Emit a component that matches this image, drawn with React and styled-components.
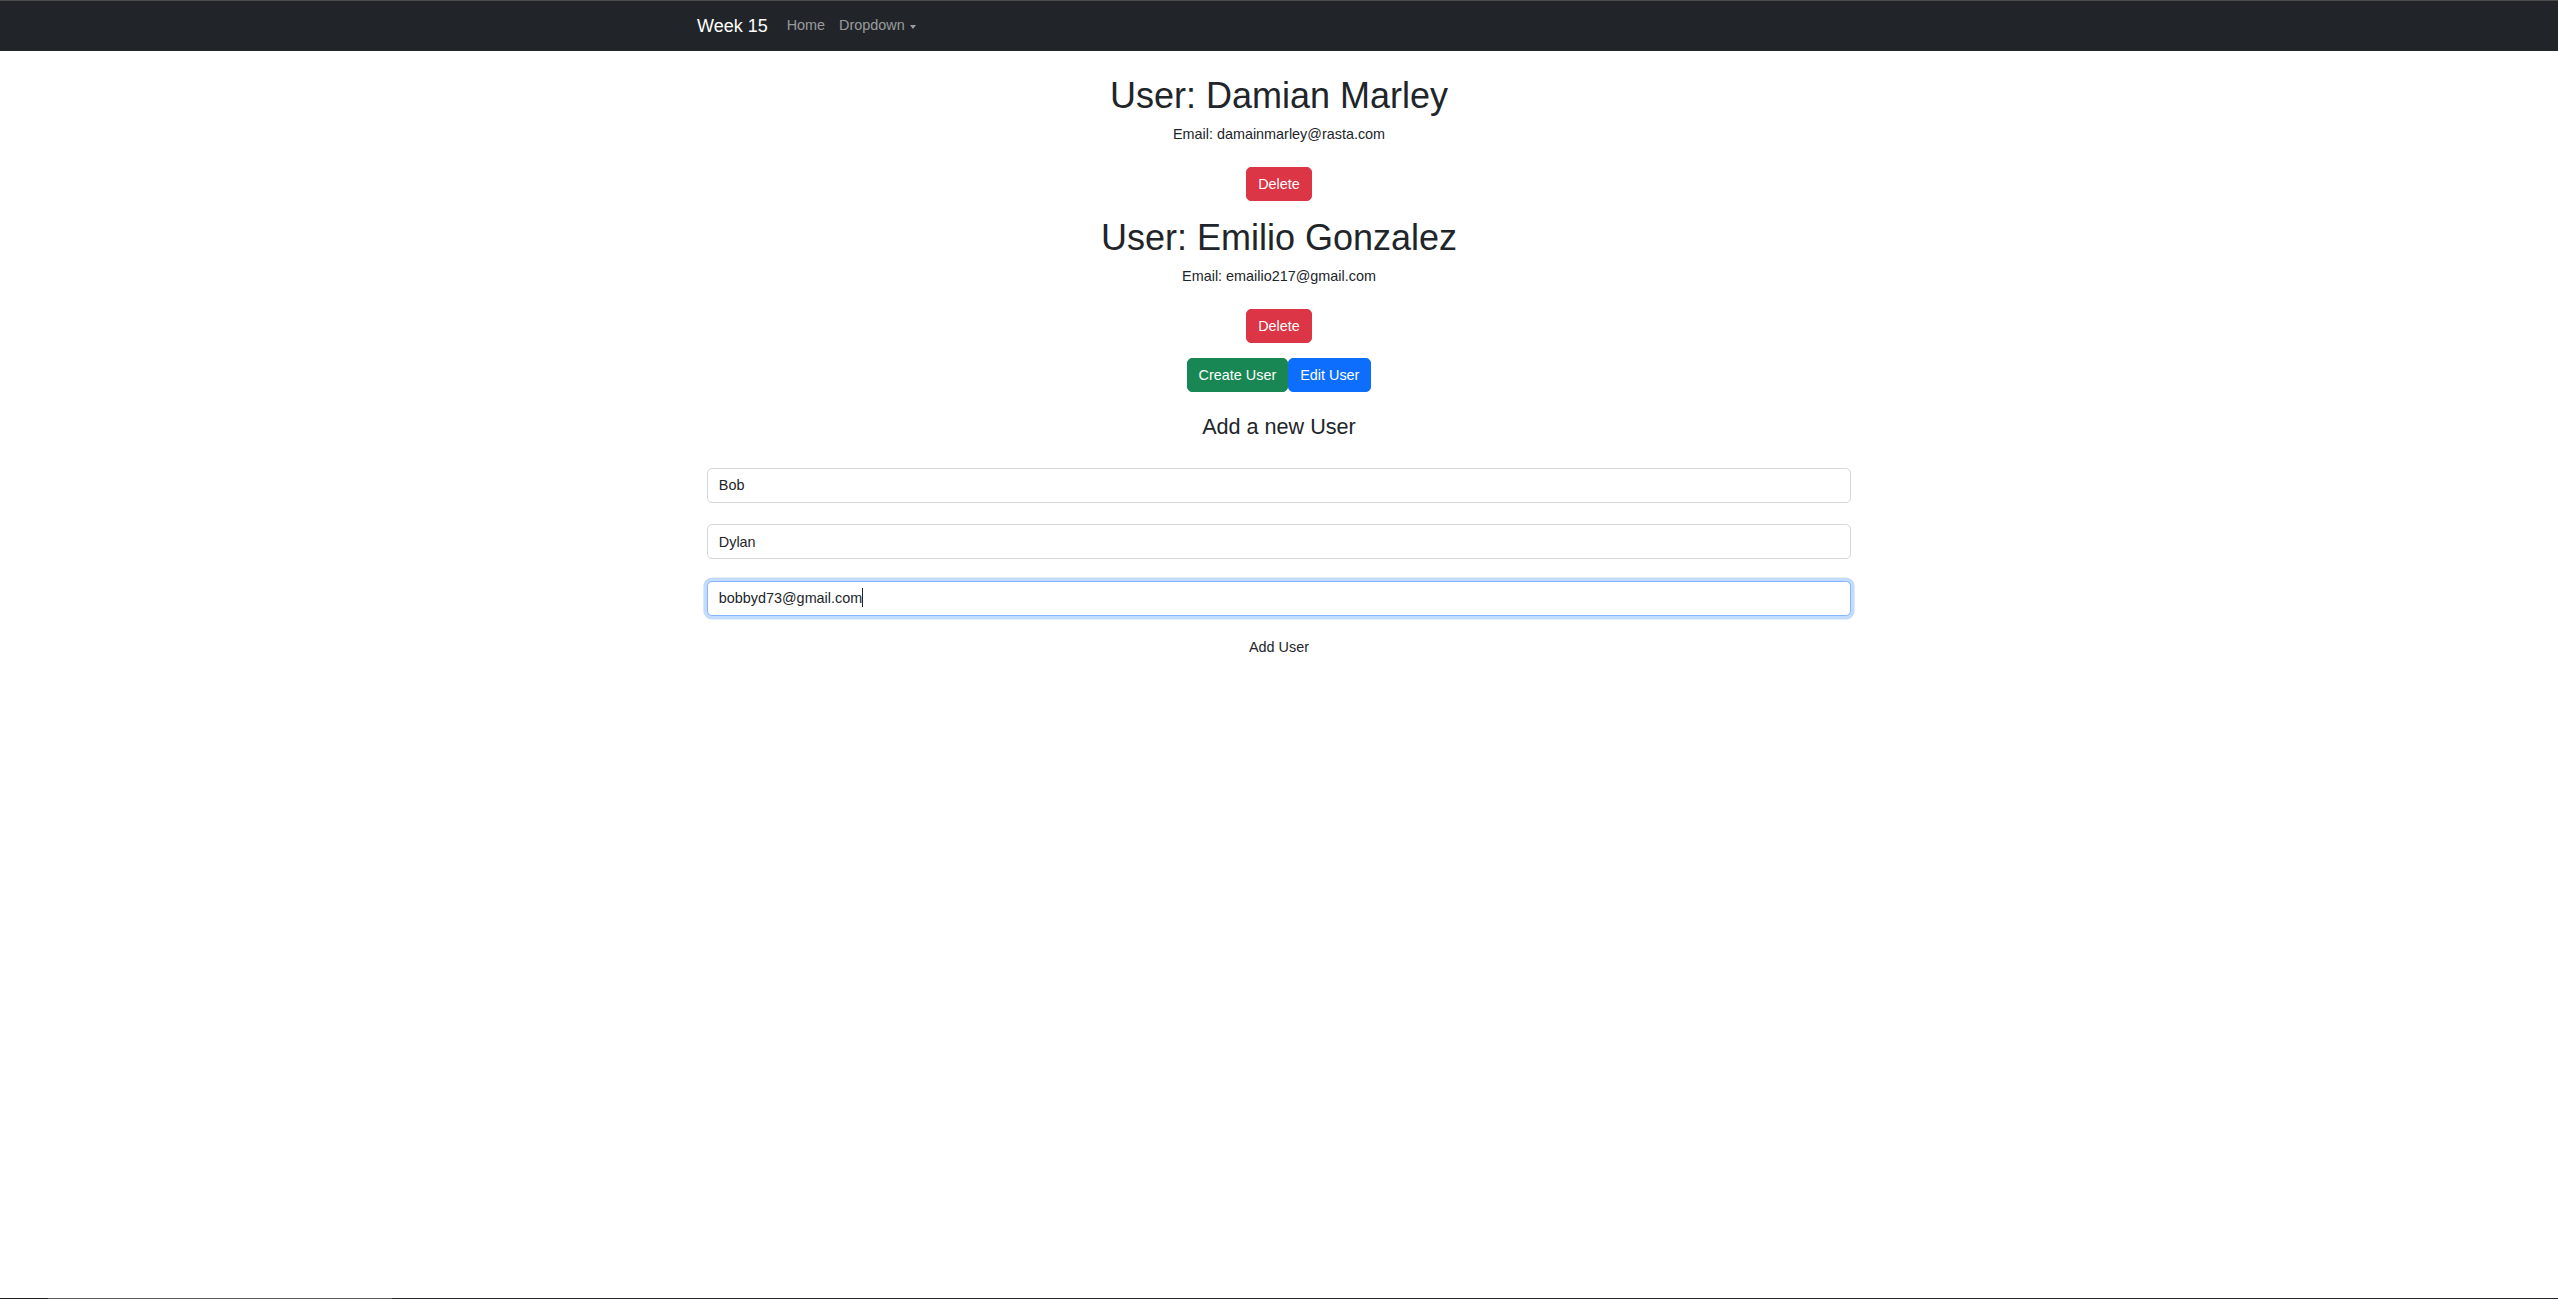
import React from 'react';
import styled, { createGlobalStyle, css } from 'styled-components';

const GlobalStyle = createGlobalStyle`
  html, body {
    margin: 0;
    padding: 0;
    background: #fff;
  }
  body {
    font-family: "Liberation Sans", Arial, sans-serif;
    color: #212529;
    font-size: 14.4px;
    line-height: 1.5;
  }
  * {
    box-sizing: border-box;
  }
`;

const Navbar = styled.nav`
  height: 51px;
  background: #212529;
  border-top: 1px solid #4b4b4c;
`;

const NavInner = styled.div`
  width: 1166px;
  height: 100%;
  margin: 0 auto;
  padding-left: 1px;
  display: flex;
  align-items: center;
`;

const Brand = styled.a`
  color: #fff;
  font-size: 18px;
  line-height: 27px;
  margin-right: 12px;
  text-decoration: none;
`;

const NavLink = styled.a`
  color: rgba(255, 255, 255, 0.55);
  font-size: 14.4px;
  line-height: 21.6px;
  padding: 0 7px;
  text-decoration: none;
  display: flex;
  align-items: center;

  ${props => props.dropdown && css`
    &::after {
      content: '';
      margin-left: 5px;
      margin-top: 1px;
      border-top: 4px solid rgba(255, 255, 255, 0.55);
      border-left: 3.6px solid transparent;
      border-right: 3.6px solid transparent;
    }
  `}
`;

const Main = styled.main`
  width: 1144px;
  margin: 0 auto;
  padding-top: 23px;
  display: flex;
  flex-direction: column;
  align-items: center;
  text-align: center;
`;

const UserBlock = styled.section`
  display: flex;
  flex-direction: column;
  align-items: center;
  margin-bottom: 15px;
`;

const UserName = styled.h1`
  margin: 0 0 7px;
  font-size: 36px;
  font-weight: 500;
  line-height: 43px;
`;

const Email = styled.p`
  margin: 0 0 21.4px;
  font-size: 14.4px;
  line-height: 21.6px;
`;

const variants = {
  danger: '#dc3545',
  success: '#198754',
  primary: '#0d6efd',
};

const Button = styled.button`
  font-family: inherit;
  font-size: 14.4px;
  line-height: 22px;
  padding: 5px 11px;
  border: 1px solid ${props => variants[props.variant] || 'transparent'};
  border-radius: 5px;
  background: ${props => variants[props.variant] || 'transparent'};
  color: ${props => (props.variant ? '#fff' : '#212529')};
  cursor: pointer;
`;

const ButtonGroup = styled.div`
  display: flex;
  margin-bottom: 22.5px;
`;

const FormTitle = styled.h4`
  margin: 0 0 27.5px;
  font-size: 21.6px;
  font-weight: 500;
  line-height: 26px;
`;

const Form = styled.form`
  width: 100%;
  display: flex;
  flex-direction: column;
  align-items: center;
`;

const Field = styled.div`
  position: relative;
  width: 100%;
  margin-bottom: ${props => (props.last ? '14px' : '21.5px')};
`;

const Input = styled.input`
  display: block;
  width: 100%;
  height: 35px;
  padding: 0 10.8px;
  font-family: inherit;
  font-size: 14.4px;
  color: #212529;
  background: #fff;
  border: 1px solid ${props => (props.focused ? '#86b7fe' : '#d3d6da')};
  border-radius: 5px;
  outline: none;
  box-shadow: ${props => (props.focused ? '0 0 0 3.6px rgba(13, 110, 253, 0.25)' : 'none')};
`;

const Caret = styled.span`
  position: absolute;
  left: 155px;
  top: 7px;
  width: 1px;
  height: 19px;
  background: #212529;
`;

const BottomEdge = styled.div`
  position: fixed;
  left: 0;
  right: 0;
  bottom: 0;
  height: 1px;
  display: flex;
`;

const EdgeSegment = styled.span`
  width: ${props => props.w || 'auto'};
  flex: ${props => (props.w ? 'none' : 1)};
  background: ${props => props.color};
`;

const users = [
  { name: 'Damian Marley', email: 'damainmarley@rasta.com' },
  { name: 'Emilio Gonzalez', email: 'emailio217@gmail.com' },
];

export default function App() {
  return (
    <>
      <GlobalStyle />
      <Navbar>
        <NavInner>
          <Brand href="#">Week 15</Brand>
          <NavLink href="#">Home</NavLink>
          <NavLink href="#" dropdown>Dropdown</NavLink>
        </NavInner>
      </Navbar>
      <Main>
        {users.map(user => (
          <UserBlock key={user.email}>
            <UserName>User: {user.name}</UserName>
            <Email>Email: {user.email}</Email>
            <Button variant="danger">Delete</Button>
          </UserBlock>
        ))}
        <ButtonGroup>
          <Button variant="success">Create User</Button>
          <Button variant="primary">Edit User</Button>
        </ButtonGroup>
        <FormTitle>Add a new User</FormTitle>
        <Form onSubmit={e => e.preventDefault()}>
          <Field>
            <Input defaultValue="Bob" />
          </Field>
          <Field>
            <Input defaultValue="Dylan" />
          </Field>
          <Field last>
            <Input defaultValue="bobbyd73@gmail.com" focused />
            <Caret />
          </Field>
          <Button type="submit">Add User</Button>
        </Form>
      </Main>
      <BottomEdge>
        <EdgeSegment w="48px" color="#1f1f1f" />
        <EdgeSegment w="344px" color="#5e5e5e" />
        <EdgeSegment color="#2b2333" />
      </BottomEdge>
    </>
  );
}
